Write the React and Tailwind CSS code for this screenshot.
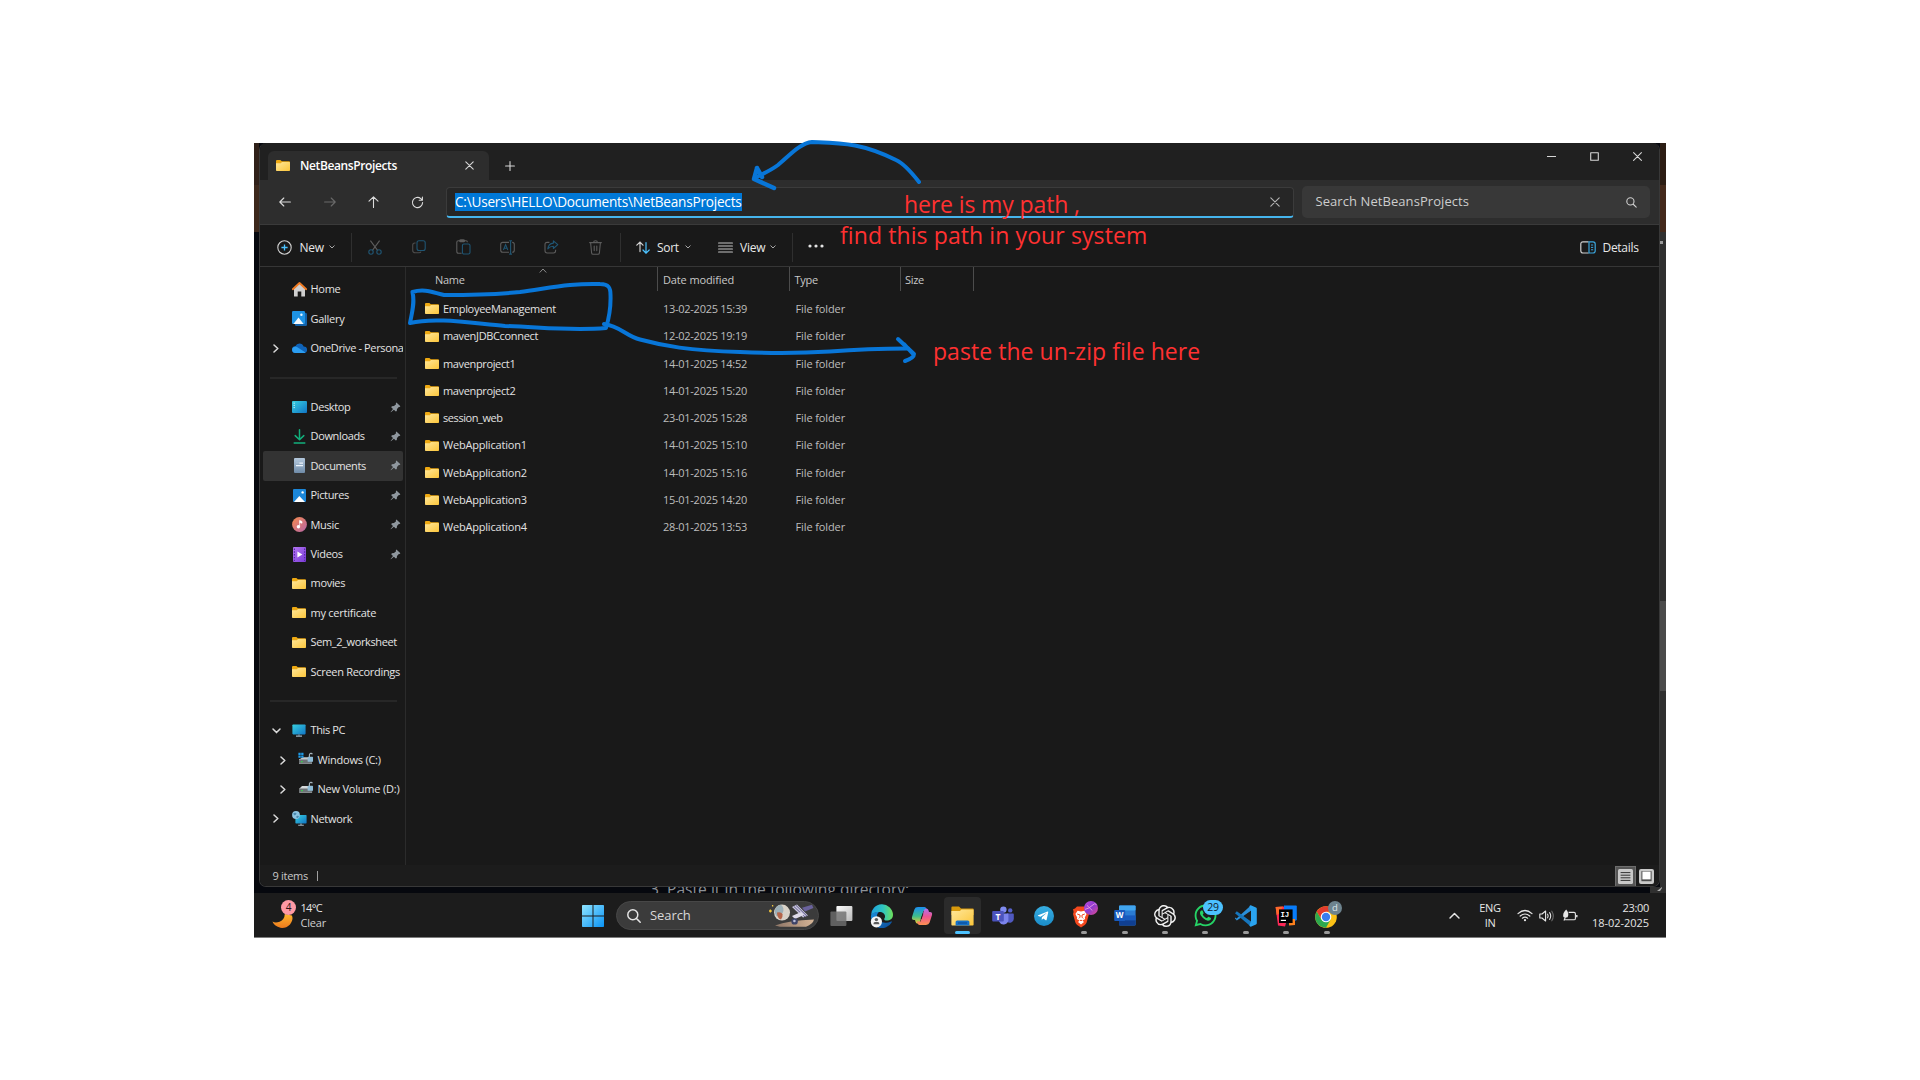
import React from "react";
import { FaWhatsapp, FaTelegramPlane } from "react-icons/fa";
import { SiOpenai } from "react-icons/si";

/* ---------- shared gradients ---------- */
function Defs() {
  return (
    <svg width="0" height="0" className="absolute">
      <defs>
        <linearGradient id="folder" x1="0" y1="0" x2="1" y2="1">
          <stop offset="0" stopColor="#ffe79b" />
          <stop offset="1" stopColor="#fcc63a" />
        </linearGradient>
        <linearGradient id="screen" x1="0" y1="0" x2="1" y2="1">
          <stop offset="0" stopColor="#37d0e0" />
          <stop offset="1" stopColor="#1174c4" />
        </linearGradient>
        <linearGradient id="music" x1="0" y1="0" x2="1" y2="1">
          <stop offset="0" stopColor="#f78a4c" />
          <stop offset="1" stopColor="#b565a8" />
        </linearGradient>
        <linearGradient id="video" x1="0" y1="0" x2="1" y2="1">
          <stop offset="0" stopColor="#b477f2" />
          <stop offset="1" stopColor="#7a3bd6" />
        </linearGradient>
        <linearGradient id="docs" x1="0" y1="0" x2="0" y2="1">
          <stop offset="0" stopColor="#b4c8dc" />
          <stop offset="1" stopColor="#6f8ba8" />
        </linearGradient>
        <linearGradient id="start" x1="0" y1="0" x2="1" y2="1">
          <stop offset="0" stopColor="#8fe4ff" />
          <stop offset="1" stopColor="#0a93f5" />
        </linearGradient>
        <linearGradient id="moon" x1="0" y1="0" x2="0" y2="1">
          <stop offset="0" stopColor="#ffb52e" />
          <stop offset="1" stopColor="#ee7a1c" />
        </linearGradient>
        <linearGradient id="edgeTop" x1="0" y1="0" x2="1" y2="0">
          <stop offset="0" stopColor="#1d9fe0" />
          <stop offset="0.55" stopColor="#2fc5c0" />
          <stop offset="1" stopColor="#6fe05a" />
        </linearGradient>
        <linearGradient id="edgeLow" x1="0" y1="0" x2="1" y2="1">
          <stop offset="0" stopColor="#1a8fdc" />
          <stop offset="1" stopColor="#0c4a96" />
        </linearGradient>
        <linearGradient id="copA" x1="0" y1="0" x2="0" y2="1">
          <stop offset="0" stopColor="#1c8ef0" />
          <stop offset="0.55" stopColor="#3dbd8c" />
          <stop offset="1" stopColor="#f4d02c" />
        </linearGradient>
        <linearGradient id="copB" x1="0" y1="0" x2="0" y2="1">
          <stop offset="0" stopColor="#b070f0" />
          <stop offset="0.5" stopColor="#ee5590" />
          <stop offset="1" stopColor="#fb9150" />
        </linearGradient>
        <linearGradient id="brave" x1="0" y1="0" x2="1" y2="1">
          <stop offset="0" stopColor="#c04ae0" />
          <stop offset="0.5" stopColor="#8a3bd0" />
          <stop offset="1" stopColor="#e64c8c" />
        </linearGradient>
        <linearGradient id="lens" x1="0" y1="0" x2="1" y2="1">
          <stop offset="0" stopColor="#fdfdfd" />
          <stop offset="1" stopColor="#b9b9b9" />
        </linearGradient>
        <linearGradient id="pill" x1="0" y1="0" x2="1" y2="0">
          <stop offset="0" stopColor="#8d7566" />
          <stop offset="1" stopColor="#d5b496" />
        </linearGradient>
      </defs>
    </svg>
  );
}

/* ---------- small line glyphs ---------- */
const Line = ({ d, w = 14, h = 14, vb = "0 0 14 14", c = "#d6d6d6", s = 1.1, className = "" }) => (
  <svg width={w} height={h} viewBox={vb} fill="none" stroke={c} strokeWidth={s} strokeLinecap="round" strokeLinejoin="round" className={"shrink-0 " + className}>
    <path d={d} />
  </svg>
);

const Chevron = ({ className = "" }) => (
  <Line w={6} h={4} vb="0 0 6 4" d="M.8 .8 3 3 5.2 .8" c="#a8a8a8" s={1} className={className} />
);

/* ---------- sidebar and list icons ---------- */
const Folder = ({ w = 14 }) => (
  <svg width={w} height={(w * 11) / 14} viewBox="0 0 14 11" className="shrink-0">
    <path d="M0 1Q0 0 1 0H4.4L5.8 1.2H13Q14 1.2 14 2.2V6H0Z" fill="#eea912" />
    <path d="M0 3.2H4.8L6 2H13.2Q14 2 14 2.8V10.2Q14 11 13.2 11H.8Q0 11 0 10.2Z" fill="url(#folder)" />
  </svg>
);

const icons = {
  folder: <Folder />,
  home: (
    <svg width="15" height="15" viewBox="0 0 15 15">
      <path d="M2 6.5 7.5 1.5 13 6.5V14Q13 14.5 12.5 14.5H9.3V9.5H5.7V14.5H2.5Q2 14.5 2 14Z" fill="#cfcfcf" />
      <path d="M.8 7.2 7.5 1 14.2 7.2" stroke="#ef7a22" strokeWidth="1.9" fill="none" strokeLinecap="round" strokeLinejoin="round" />
    </svg>
  ),
  gallery: (
    <svg width="15" height="15" viewBox="0 0 15 15">
      <rect x="3" y="2" width="12" height="13" rx="1.2" fill="#1261a8" />
      <rect x="0" y="0" width="13" height="13" rx="1.2" fill="#1e93e4" />
      <path d="M1.4 13 6.5 6.6 11.6 13Z" fill="#f3f8fc" />
      <circle cx="9.4" cy="3.8" r="1.2" fill="#e8f5ff" />
    </svg>
  ),
  onedrive: (
    <svg width="15" height="10" viewBox="0 0 15 10">
      <path d="M3.4 3.2A4.4 4.4 0 0 1 11.6 3.4 3.3 3.3 0 0 1 12 10H3.2A3.2 3.2 0 0 1 3.4 3.2Z" fill="#0f63b8" />
      <path d="M.1 6.6A3.2 3.2 0 0 1 5 4L13.5 9.4Q12.8 10 11.8 10H3.2A3.1 3.1 0 0 1 .1 6.6Z" fill="#2b9df0" />
    </svg>
  ),
  desktop: (
    <svg width="15" height="12" viewBox="0 0 15 12">
      <rect width="15" height="12" rx="1" fill="url(#screen)" />
      <path d="M1.5 2.2h1.4M1.5 4.4h1.4M1.5 6.6h1.4" stroke="#c9f6fa" strokeWidth=".9" />
    </svg>
  ),
  downloads: <Line w={13} h={15} vb="0 0 13 15" d="M6.5 .8V10.4M2.2 6.6 6.5 10.8 10.8 6.6M1.2 14H11.8" c="#12b07c" s={1.5} />,
  documents: (
    <svg width="11" height="15" viewBox="0 0 11 15">
      <rect width="11" height="15" rx="1" fill="url(#docs)" />
      <path d="M2 5.2h7M2 7.6h7" stroke="#eef4fa" strokeWidth="1.3" />
      <path d="M2 5.2h3.4" stroke="#8fa8c2" strokeWidth="1.3" />
    </svg>
  ),
  pictures: (
    <svg width="13" height="13" viewBox="0 0 13 13">
      <rect width="13" height="13" rx="1" fill="#1b86d8" />
      <path d="M1 13 6.3 7 12 13Z" fill="#fff" />
      <circle cx="9.6" cy="3.4" r="1.2" fill="#fff" />
    </svg>
  ),
  music: (
    <svg width="15" height="15" viewBox="0 0 15 15">
      <circle cx="7.5" cy="7.5" r="7.4" fill="url(#music)" />
      <circle cx="6.4" cy="9.8" r="1.7" fill="#fff" />
      <path d="M7.6 9.8V3.4L10 4.6V6.2L7.6 5.4" fill="#fff" stroke="#fff" strokeWidth=".7" />
    </svg>
  ),
  videos: (
    <svg width="13" height="15" viewBox="0 0 13 15">
      <rect width="13" height="15" rx="1" fill="url(#video)" />
      <path d="M1.4 1.5V14M11.6 1.5V14" stroke="#5a24ab" strokeWidth="1.2" strokeDasharray="1.4 1.4" />
      <path d="M4.4 4.4 9.4 7.5 4.4 10.6Z" fill="#fff" />
    </svg>
  ),
  pc: (
    <svg width="14" height="13" viewBox="0 0 14 13">
      <rect x=".4" y=".4" width="13.2" height="10" rx=".8" fill="url(#screen)" />
      <path d="M4 12.2h6" stroke="#9fb4c2" strokeWidth="1.2" />
      <path d="M7 10.4v1.4" stroke="#7d93a3" strokeWidth="1.6" />
    </svg>
  ),
  winDrive: (
    <svg width="16" height="14" viewBox="0 0 16 14" className="mb-[2px]">
      <path d="M2 7 4.5 5.2H12L14 7V12H1V7Z" fill="#c4c9cc" />
      <rect x="1" y="7.4" width="13" height="4.4" rx=".6" fill="#6d7376" />
      <rect x="3" y="9" width="1.6" height="1.3" fill="#38d14c" />
      <path d="M.4 .8h2.3v2.2H.4zM3.2 .8h2.3v2.2H3.2zM.4 3.5h2.3v2.2H.4zM3.2 3.5h2.3v2.2H3.2z" fill="#1e9be8" />
      <path d="M11.4 5V2.8a1.6 1.6 0 0 1 3-.6" stroke="#a9b7c0" strokeWidth="1.1" fill="none" />
      <rect x="9.6" y="4.8" width="5.4" height="5" rx=".6" fill="#8fbdd8" />
    </svg>
  ),
  drive: (
    <svg width="16" height="14" viewBox="0 0 16 14" className="mb-[2px]">
      <path d="M1.5 7.4 4 5H12L14 7.4V12H1.5Z" fill="#d5d9db" />
      <rect x="1.2" y="7.4" width="13" height="4.4" rx=".6" fill="#6d7376" />
      <rect x="3.2" y="9" width="1.6" height="1.3" fill="#38d14c" />
      <path d="M11.4 5V2.8a1.6 1.6 0 0 1 3-.6" stroke="#a9b7c0" strokeWidth="1.1" fill="none" />
      <rect x="9.6" y="4.8" width="5.4" height="5" rx=".6" fill="#8fbdd8" />
    </svg>
  ),
  network: (
    <svg width="15" height="15" viewBox="0 0 15 15">
      <rect x="3.4" y="4" width="11.2" height="8.4" rx=".7" fill="url(#screen)" />
      <path d="M6.2 14.2h5.6M9 12.4v1.6" stroke="#9fb4c2" strokeWidth="1.1" />
      <circle cx="4" cy="4" r="3.9" fill="#8cc3e0" />
      <path d="M1.2 2.6Q3 1 4.6 2.4 4 4.4 2.2 4.2ZM4.4 5Q6.4 4.4 7 5.2 6 7.4 4.6 7Z" fill="#4b88ac" />
    </svg>
  ),
};

const Pin = () => (
  <svg width="11" height="11" viewBox="0 0 11 11" className="shrink-0">
    <path d="M6.4 .6 10.4 4.2 9.6 5 8.8 4.9 7 7 6.8 9 5.8 9.6 3.9 7.8.9 10.3.6 10 3 7 1.2 5.2 1.9 4.3 4 4 6.1 2.2 5.8 1.3Z" fill="#8f979e" />
  </svg>
);

/* ---------- data ---------- */
const sidebar = [
  { icon: "home", text: "Home", t: "tracking-[-0.27px]" },
  { icon: "gallery", text: "Gallery", t: "tracking-[-0.27px]" },
  { icon: "onedrive", text: "OneDrive - Persona", chev: "right", t: "tracking-[-0.37px]" },
  { sep: true },
  { icon: "desktop", text: "Desktop", pin: true, t: "tracking-[-0.35px]" },
  { icon: "downloads", text: "Downloads", pin: true, t: "tracking-[-0.35px]" },
  { icon: "documents", text: "Documents", pin: true, sel: true, t: "tracking-[-0.4px]" },
  { icon: "pictures", text: "Pictures", pin: true, t: "tracking-[-0.35px]" },
  { icon: "music", text: "Music", pin: true, t: "tracking-[-0.3px]" },
  { icon: "videos", text: "Videos", pin: true, t: "tracking-[-0.3px]" },
  { icon: "folder", text: "movies", t: "tracking-[-0.3px]" },
  { icon: "folder", text: "my certificate", t: "tracking-[-0.25px]" },
  { icon: "folder", text: "Sem_2_worksheet", t: "tracking-[-0.38px]" },
  { icon: "folder", text: "Screen Recordings", t: "tracking-[-0.3px]" },
  { sep: true },
  { icon: "pc", text: "This PC", chev: "down", t: "tracking-[-0.38px]" },
  { icon: "winDrive", text: "Windows (C:)", chev: "right", nest: true, t: "tracking-[-0.22px]" },
  { icon: "drive", text: "New Volume (D:)", chev: "right", nest: true, t: "tracking-[-0.21px]" },
  { icon: "network", text: "Network", chev: "right", t: "tracking-[-0.3px]" },
];

const files = [
  ["EmployeeManagement", "13-02-2025 15:39", "tracking-[-0.3px]"],
  ["mavenJDBCconnect", "12-02-2025 19:19", "tracking-[-0.34px]"],
  ["mavenproject1", "14-01-2025 14:52", "tracking-[-0.36px]"],
  ["mavenproject2", "14-01-2025 15:20", "tracking-[-0.36px]"],
  ["session_web", "23-01-2025 15:28", "tracking-[-0.42px]"],
  ["WebApplication1", "14-01-2025 15:10", "tracking-[-0.2px]"],
  ["WebApplication2", "14-01-2025 15:16", "tracking-[-0.2px]"],
  ["WebApplication3", "15-01-2025 14:20", "tracking-[-0.2px]"],
  ["WebApplication4", "28-01-2025 13:53", "tracking-[-0.2px]"],
];

/* ---------- window parts ---------- */
function TitleBar() {
  return (
    <div className="flex h-[37px] items-end bg-[#202020]">
      <div className="ml-[8px] flex h-[29px] w-[221px] items-center rounded-t-[6px] bg-[#2d2d2d] pl-[8px] pr-[15px]">
        <Folder />
        <span className="ml-[10px] pt-[1px] text-[12px] font-semibold tracking-[-0.38px] text-white">NetBeansProjects</span>
        <Line className="ml-auto" w={9} h={9} vb="0 0 9 9" d="M.8 .8 8.2 8.2M8.2 .8 .8 8.2" />
      </div>
      <Line className="mb-[9px] ml-[16px]" w={10} h={10} vb="0 0 10 10" d="M5 .6V9.4M.6 5H9.4" />
      <div className="mb-[19px] ml-auto mr-[17px] flex items-center">
        <Line w={9} h={9} vb="0 0 9 9" d="M.4 4.5H8.6" s={1} />
        <Line className="ml-[34px]" w={9} h={9} vb="0 0 9 9" d="M.7 .7H8.3V8.3H.7Z" />
        <Line className="ml-[34px]" w={9} h={9} vb="0 0 9 9" d="M.6 .6 8.4 8.4M8.4 .6 .6 8.4" />
      </div>
    </div>
  );
}

function AddressRow() {
  return (
    <div className="flex h-[45px] items-center border-b border-[#3a3a3a] bg-[#2d2d2d] pr-[9px]">
      <Line className="ml-[19px]" w={12} h={10} vb="0 0 12 10" d="M11.4 5H.8M4.8 1 .8 5 4.8 9" c="#dcdcdc" />
      <Line className="ml-[33px]" w={12} h={10} vb="0 0 12 10" d="M.6 5H11.2M7.2 1 11.2 5 7.2 9" c="#6a6a6a" />
      <Line className="ml-[32px]" w={11} h={12} vb="0 0 11 12" d="M5.5 11.4V.8M1 5.2 5.5 .8 10 5.2" c="#dcdcdc" />
      <Line className="ml-[32px]" w={13} h={13} vb="0 0 13 13" d="M11.6 6.6A5.1 5.1 0 1 1 9.8 2.6L11.3 4.1M11.4 1V4.2H8.2" c="#dcdcdc" />
      <div className="ml-[22px] flex h-[31px] w-[848px] items-center rounded-[4px] border border-b-2 border-[#3b3b3b] border-b-[#45b4ec] bg-[#262626] pl-[8px] pr-[13px]">
        <span className="h-[18px] bg-[#0078d7] text-[13.6px] leading-[18px] tracking-[-0.22px] text-white">
          C:\Users\HELLO\Documents\NetBeansProjects
        </span>
        <Line className="ml-auto" w={10} h={10} vb="0 0 10 10" d="M.8 .8 9.2 9.2M9.2 .8 .8 9.2" c="#b4b4b4" />
      </div>
      <div className="ml-auto flex h-[32px] w-[348px] items-center rounded-[5px] bg-[#383838] pl-[13.5px] pr-[13px]">
        <span className="text-[13px] tracking-[0.07px] text-[#cdcdcd]">Search NetBeansProjects</span>
        <Line className="ml-auto" w={11} h={11} vb="0 0 11 11" d="M8 4.4A3.6 3.6 0 1 1 .8 4.4 3.6 3.6 0 0 1 8 4.4ZM7 7 10.2 10.2" c="#d0d0d0" />
      </div>
    </div>
  );
}

const Divider = ({ className }) => <div className={"h-[29px] w-px bg-[#2f2f2f] " + className} />;

function Toolbar() {
  return (
    <div className="flex h-[42px] items-center border-b border-[#363636] bg-[#191919] pt-[3px] text-[12px] text-[#e8e8e8]">
      <svg width="15" height="15" viewBox="0 0 15 15" fill="none" className="ml-[16.5px]">
        <circle cx="7.5" cy="7.5" r="6.7" stroke="#cfcfcf" strokeWidth="1.1" />
        <path d="M7.5 4.4V10.6M4.4 7.5H10.6" stroke="#4cc2ff" strokeWidth="1.3" />
      </svg>
      <span className="ml-[8px] mt-[2px] w-[25px] tracking-[-0.2px]">New</span>
      <Chevron className="ml-[4.5px]" />
      <Divider className="ml-[16px]" />
      <svg width="14" height="15" viewBox="0 0 14 15" fill="none" strokeWidth="1.1" className="ml-[16px]">
        <path d="M2.4 .6 9.6 10.4M11.6 .6 4.4 10.4" stroke="#5c5c5c" />
        <circle cx="3" cy="12" r="2.2" stroke="#1f5573" />
        <circle cx="11" cy="12" r="2.2" stroke="#1f5573" />
      </svg>
      <svg width="14" height="14" viewBox="0 0 14 14" fill="none" strokeWidth="1.1" className="ml-[30px]">
        <path d="M3.6 3H2.8Q.7 3 .7 5.2V10.2Q.7 12.8 3.2 12.8H7Q8.6 12.8 9 11.6" stroke="#4c4c4c" />
        <rect x="5" y=".7" width="8.2" height="9.8" rx="2" stroke="#1f5573" />
      </svg>
      <svg width="15" height="16" viewBox="0 0 15 16" fill="none" strokeWidth="1.1" className="ml-[30px]">
        <path d="M5.6 14.2H2.4Q.8 14.2 .8 12.6V3.2Q.8 1.8 2.4 1.8H10Q11.4 1.8 11.4 3.2M3.6 1.8Q3.6 .7 4.6 .7H7.6Q8.6 .7 8.6 1.8 8.6 2.8 7.6 2.8H4.6Q3.6 2.8 3.6 1.8" stroke="#5c5c5c" />
        <rect x="6.4" y="5" width="7.6" height="10" rx="1.6" stroke="#1f5573" />
      </svg>
      <svg width="15" height="15" viewBox="0 0 15 15" fill="none" strokeWidth="1.1" className="ml-[29px]">
        <path d="M9 2.4H2.8Q.7 2.4 .7 4.4V10.2Q.7 12.2 2.8 12.2H9M12.2 2.4Q14.3 2.4 14.3 4.4V10.2Q14.3 12.2 12.2 12.2" stroke="#5c5c5c" />
        <path d="M3.4 10 5.6 4.6 7.8 10M4.2 8.2H7M10.6 .9V13.9M9.2 .7H12M9.2 14.1H12" stroke="#1f5573" />
      </svg>
      <svg width="15" height="14" viewBox="0 0 15 14" fill="none" strokeWidth="1.1" strokeLinejoin="round" className="ml-[29px]">
        <path d="M5.4 2.4H3.2Q1 2.4 1 4.6V10.8Q1 13 3.2 13H9.4Q11.6 13 11.6 10.8V9.8" stroke="#5c5c5c" />
        <path d="M9.4 .8 13.8 4.7 9.4 8.5V6.2Q6 6.2 3.8 8.8 4.4 3.6 9.4 3.1Z" stroke="#1f5573" />
      </svg>
      <Line className="ml-[30px]" w={13} h={15} vb="0 0 13 15" c="#5c5c5c" d="M.6 2.6H12.4M4.6 2.4Q4.6 .7 6.5 .7T8.4 2.4M1.6 2.8 2.6 12.8Q2.8 14.2 4 14.2H9Q10.2 14.2 10.4 12.8L11.4 2.8M5.2 6V10.6M7.8 6V10.6" />
      <Divider className="ml-[18px]" />
      <svg width="14" height="13" viewBox="0 0 14 13" fill="none" strokeWidth="1.2" strokeLinecap="round" className="ml-[15px]">
        <path d="M4 10.6V1.2M.8 4.2 4 1 7 4.2" stroke="#cfcfcf" />
        <path d="M10 1.6V12M7 9 10 12.2 13.2 9" stroke="#4cc2ff" />
      </svg>
      <span className="ml-[7px] mt-[2px] w-[24px] tracking-[-0.3px]">Sort</span>
      <Chevron className="ml-[4px]" />
      <Line className="ml-[27px]" w={15} h={11} vb="0 0 15 11" s={1.2} c="#c4c4c4" d="M.6 1H14.4M.6 4H14.4M.6 7H14.4M.6 10H14.4" />
      <span className="ml-[7px] mt-[2px] w-[27px] tracking-[-0.2px]">View</span>
      <Chevron className="ml-[3px]" />
      <Divider className="ml-[16px]" />
      <svg width="16" height="4" viewBox="0 0 16 4" fill="#e4e4e4" className="-mt-[2px] ml-[15px]">
        <circle cx="2" cy="2" r="1.6" />
        <circle cx="8" cy="2" r="1.6" />
        <circle cx="14" cy="2" r="1.6" />
      </svg>
      <svg width="16" height="13" viewBox="0 0 16 13" fill="none" className="ml-auto">
        <path d="M8.6 .8H3Q.8 .8 .8 3V9.8Q.8 12 3 12H8.6" stroke="#cfcfcf" strokeWidth="1.2" />
        <path d="M9 .8H13Q15.2 .8 15.2 3V9.8Q15.2 12 13 12H9Z" stroke="#3ba6dd" strokeWidth="1.2" />
        <path d="M11 4H13.2M11 6.4H13.2M11 8.8H13.2" stroke="#3ba6dd" />
      </svg>
      <span className="ml-[7px] mr-[19px] mt-[2px] w-[37.5px] tracking-[-0.3px]">Details</span>
    </div>
  );
}

function SideRow({ item }) {
  if (item.sep)
    return (
      <div className="flex h-[29.42px] items-center pl-[7px]">
        <div className="h-[2px] w-[127px] bg-[#272727]" />
      </div>
    );
  return (
    <div className={"flex h-[29.42px] items-center overflow-hidden rounded-[2px] " + (item.sel ? "bg-[#333333]" : "")}>
      <div className={"flex w-[26px] shrink-0 items-center justify-center " + (item.nest ? "ml-[7px]" : "")}>
        {item.chev === "right" && <Line w={6} h={9} vb="0 0 6 9" d="M1 1 4.8 4.5 1 8" c="#dadada" s={1.5} />}
        {item.chev === "down" && <Line w={9} h={6} vb="0 0 9 6" d="M1 1 4.5 4.6 8 1" c="#dadada" s={1.5} />}
      </div>
      <div className="ml-[2px] flex w-[16px] shrink-0 items-center justify-center">{icons[item.icon]}</div>
      <span className={"ml-[3.5px] whitespace-nowrap text-[11px] text-[#e4e4e4] " + item.t}>{item.text}</span>
      {item.pin && (
        <div className="ml-auto mr-[2px]">
          <Pin />
        </div>
      )}
    </div>
  );
}

function Content() {
  return (
    <div className="flex h-[598px] bg-[#191919]">
      <div className="w-[146px] border-r border-[#2b2b2b] pl-[3px] pr-[2px] pt-[7.8px]">
        {sidebar.map((s, i) => (
          <SideRow key={i} item={s} />
        ))}
      </div>
      <div className="flex-1 text-[11px]">
        <div className="flex h-[24px] text-[#c8c8c8]">
          <div className="relative flex w-[252px] items-center border-r border-[#4c4c4c] pl-[29px] pt-[2px] tracking-[-0.3px]">
            Name
            <Line className="absolute left-[133px] top-[1px]" w={8} h={5} vb="0 0 8 5" d="M1 4.2 4 1 7 4.2" c="#8a8a8a" s={1} />
          </div>
          <div className="flex w-[132px] items-center border-r border-[#4c4c4c] pl-[5px] pt-[2px] tracking-[-0.13px]">Date modified</div>
          <div className="flex w-[111px] items-center border-r border-[#4c4c4c] pl-[4.5px] pt-[2px] tracking-[-0.3px]">Type</div>
          <div className="flex w-[73px] items-center border-r border-[#4c4c4c] pl-[4px] pt-[2px] tracking-[-0.3px]">Size</div>
        </div>
        <div className="pt-[4.2px]">
          {files.map(([name, date, t]) => (
            <div key={name} className="flex h-[27.25px] items-center pl-[19px] text-[#bdbdbd]">
              <Folder />
              <span className={"ml-[4px] w-[220px] pt-[1px] text-[#e2e2e2] " + t}>{name}</span>
              <span className="w-[132.5px] pt-[1px] tracking-[-0.27px]">{date}</span>
              <span className="pt-[1px] tracking-[-0.11px]">File folder</span>
            </div>
          ))}
        </div>
      </div>
    </div>
  );
}

function StatusBar() {
  return (
    <div className="flex h-[22px] items-center bg-[#1c1c1c] pl-[12.5px] pr-[5px] text-[11px] text-[#c8c8c8]">
      <span className="tracking-[-0.28px]">9 items</span>
      <span className="ml-[9px] h-[10px] w-px bg-[#a0a0a0]" />
      <div className="ml-auto flex h-[21px] w-[21px] items-center justify-center border border-[#6e6e6e] bg-[#555555]">
        <svg width="15" height="15" viewBox="0 0 15 15">
          <rect width="15" height="15" rx="1.5" fill="#c9c9c9" />
          <path d="M2.6 3.6H12.4M2.6 6.2H12.4M2.6 8.8H12.4M2.6 11.4H12.4" stroke="#333" strokeWidth="1" />
        </svg>
      </div>
      <svg width="15" height="15" viewBox="0 0 15 15" className="ml-[3px]">
        <rect width="15" height="15" rx="2" fill="#c9c9c9" />
        <rect x="2.4" y="2.2" width="10.2" height="10" fill="#4c4c4c" />
        <rect x="3.4" y="2.6" width="8.2" height="7.8" fill="#fff" />
      </svg>
    </div>
  );
}

/* ---------- taskbar ---------- */
const apps = {
  taskView: (
    <svg width="23" height="22" viewBox="0 0 23 22">
      <rect x="6.4" y="1" width="16" height="15" rx="1" fill="url(#lens)" />
      <rect x=".4" y="6.4" width="16" height="14.6" rx="1" fill="#6f6f6f" fillOpacity=".82" />
    </svg>
  ),
  edge: (
    <svg width="24" height="24" viewBox="0 0 24 24">
      <path d="M1 11.6A11 11 0 0 1 23 10.8C23 15 19.6 16.6 17 16.6 14.6 16.6 13.8 15.6 14.4 14.6 16.4 11.4 13.6 8 9.6 8 5 8 1.4 10 1 11.6Z" fill="url(#edgeTop)" />
      <path d="M1 12C1 9.4 5 7.6 9 8 6 10 6.6 14.4 9.6 17 13 19.8 18.6 18.6 21 17.4 21.8 17.2 22 17.8 21.6 18.4A11 11 0 0 1 1 12Z" fill="url(#edgeLow)" />
      <circle cx="6.4" cy="17.8" r="5.6" fill="#f4f4f4" />
      <circle cx="6.4" cy="15.6" r="1.7" fill="#5c5c5c" />
      <path d="M3.4 20.2Q3.4 18 5 18H7.8Q9.4 18 9.4 20.2Z" fill="#5c5c5c" />
    </svg>
  ),
  copilot: (
    <svg width="22" height="20" viewBox="0 0 22 20">
      <path d="M7 1H13.4Q15 1 15.6 3L16.2 5H12.4L9 15.8Q8.4 17.6 6.6 17.6 5.2 17.6 4.6 16L4 14H3Q.4 14 1 11L3.4 3.4Q4.2 1 7 1Z" fill="url(#copA)" />
      <path d="M15 19H8.6Q7 19 6.4 17L5.8 15.4H9.6L13 4.2Q13.6 2.4 15.4 2.4 16.8 2.4 17.4 4L18 6H19Q21.6 6 21 9L18.6 16.6Q17.8 19 15 19Z" fill="url(#copB)" />
      <path d="M11.6 7.4H12.4L10.6 13H9.6Z" fill="#1c1c1c" />
    </svg>
  ),
  explorer: (
    <svg width="23" height="20" viewBox="0 0 23 20">
      <path d="M.4 1.4Q.4 .4 1.4 .4H8L10 2.4H22Q22.6 2.4 22.6 3.4V9H.4Z" fill="#d99a0c" />
      <path d="M.4 5H9L10.4 3.6H22.6V18.8Q22.6 19.6 21.8 19.6H1.2Q.4 19.6 .4 18.8Z" fill="url(#folder)" />
      <path d="M4.6 19.6V16Q4.6 14.4 6.2 14.4H16.8Q18.4 14.4 18.4 16V19.6Z" fill="#1470c8" />
      <path d="M7 17H16" stroke="#0b4c92" strokeWidth="1.1" />
    </svg>
  ),
  teams: (
    <svg width="22" height="20" viewBox="0 0 22 20">
      <circle cx="11.4" cy="3.6" r="3.2" fill="#7f8bf0" />
      <circle cx="18.2" cy="4.4" r="2.2" fill="#5560c8" />
      <path d="M15 7.6H21Q21.8 7.6 21.8 8.4V13A4 4 0 0 1 15 15.6Z" fill="#5059c0" />
      <path d="M7 7.6H16.4V14.6A5 5 0 0 1 7 15.6Z" fill="#7b83eb" />
      <rect x=".2" y="5" width="11.6" height="10.6" rx="1" fill="#4b53bc" />
      <text x="6" y="13.6" textAnchor="middle" fontSize="8.5" fontWeight="700" fill="#fff" className="font-['Open_Sans',sans-serif]">T</text>
    </svg>
  ),
  telegram: (
    <div className="flex h-[20px] w-[20px] items-center justify-center rounded-full bg-linear-to-b from-[#37aee2] to-[#1a8cc8]">
      <FaTelegramPlane className="mr-[2px] text-[12px] text-white" />
    </div>
  ),
  brave: (
    <div className="relative flex h-[24px] w-[24px] items-end">
      <svg width="18" height="22" viewBox="0 0 18 22">
        <path d="M5 .6H13L15 2.6 17 3.2 16.4 6 17 8 14.6 16.6Q14.2 18 12.8 19L9 21.6 5.2 19Q3.8 18 3.4 16.6L1 8 1.6 6 1 3.2 3 2.6Z" fill="#f4481e" />
        <path d="M9 5.4 12.4 4.8 14.6 8 12.8 11.4 13.2 13 10.4 14.4 12 16 9 18.4 6 16 7.6 14.4 4.8 13 5.2 11.4 3.4 8 5.6 4.8Z" fill="#fff" />
        <path d="M5.2 8 8 9V11.2L6.8 12.4M12.8 8 10 9V11.2L11.2 12.4M8 14.4H10" stroke="#f4481e" strokeWidth="1" fill="none" />
      </svg>
      <svg width="14" height="14" viewBox="0 0 14 14" className="absolute -right-[1.5px] -top-[3px]">
        <circle cx="7" cy="7" r="7" fill="url(#brave)" />
        <path d="M1 8.4Q5 7.6 8 4.6T12.4 3.4M3 4.4 8.4 9.6" stroke="#f09be0" strokeWidth=".9" fill="none" />
      </svg>
    </div>
  ),
  word: (
    <svg width="22" height="21" viewBox="0 0 22 21">
      <rect x="5" y=".4" width="16.6" height="20" rx="1" fill="#2b7cd3" />
      <rect x="5" y=".4" width="16.6" height="5.2" rx="1" fill="#41a5ee" />
      <rect x="5" y="10.4" width="16.6" height="5" fill="#185abd" />
      <path d="M5 15.2H21.6V19.4Q21.6 20.4 20.6 20.4H6Q5 20.4 5 19.4Z" fill="#103f91" />
      <rect x=".2" y="5" width="11" height="11" rx="1" fill="#185abd" />
      <text x="5.7" y="13.4" textAnchor="middle" fontSize="8" fontWeight="700" fill="#fff" className="font-['Open_Sans',sans-serif]">W</text>
    </svg>
  ),
  openai: <SiOpenai className="text-[22px] text-[#f0f0f0]" />,
  whatsapp: (
    <div className="relative">
      <FaWhatsapp className="text-[25px] text-[#25d366]" />
      <div className="absolute -top-[3px] left-[10px] flex h-[15px] w-[20px] items-center justify-center rounded-full bg-[#4cc2ff] text-[10.5px] leading-none tracking-[-0.3px] text-[#10202c]">29</div>
    </div>
  ),
  vscode: (
    <svg width="22" height="22" viewBox="0 0 22 22">
      <path d="M15.8 .4 1.6 13.4 0 12.4V13.4L1.8 15.6 16 5.8Z" fill="#2a8fd8" />
      <path d="M0 8.2 1.8 6.2 16 16.4 15.8 21.6Z" fill="#1676bd" />
      <path d="M15.8 .3 21 2.6Q21.8 3 21.8 3.8V18.2Q21.8 19 21 19.4L15.8 21.7Q14.8 21.6 14.4 20.6L16 16V6L14.4 1.4Q14.8 .4 15.8 .3Z" fill="#2aa4f0" />
      <path d="M16 6V16L9.4 11Z" fill="#1c1c1c" />
    </svg>
  ),
  intellij: (
    <svg width="22" height="22" viewBox="0 0 22 22">
      <path d="M.6 2 10 1.4 14 8 10 21.6 3 20.6Z" fill="#fe2857" />
      <path d="M.6 2 8 1.6 4 9 1.6 10Z" fill="#fb6a2a" />
      <path d="M9 .6H21Q21.8 .6 21.8 1.6V15L18 17 9 8Z" fill="#087cfa" />
      <path d="M14 14H20V20L14 20.6Z" fill="#fc801d" />
      <rect x="4" y="4.4" width="13.6" height="13.6" fill="#000" />
      <text x="5.4" y="11.6" fontSize="7.4" fontWeight="700" fill="#fff" className="font-['Liberation_Mono',monospace]">IJ</text>
      <path d="M5.8 15.4H11" stroke="#fff" strokeWidth="1.2" />
    </svg>
  ),
  chrome: (
    <div className="relative flex h-[24px] w-[24px] items-end">
      <svg width="22" height="22" viewBox="0 0 22 22">
        <circle cx="11" cy="11" r="10.8" fill="#fbc116" />
        <path d="M1.65 5.6A10.8 10.8 0 0 1 20.35 5.6L11 5.8 6.4 13.6Z" fill="#e33b2e" />
        <path d="M1.65 5.6A10.8 10.8 0 0 0 11 21.8L15.6 13.6 6.4 13.6Z" fill="#2da94f" />
        <circle cx="11" cy="11" r="5.3" fill="#fff" />
        <circle cx="11" cy="11" r="4.2" fill="#3a7df0" />
      </svg>
      <div className="absolute -right-[3px] -top-[3px] flex h-[14px] w-[14px] items-center justify-center rounded-full bg-[#6d838e] text-[9.5px] leading-none text-[#dfe6ea]">d</div>
    </div>
  ),
};

const taskApps = [
  ["taskView", ""], ["edge", ""], ["copilot", ""], ["explorer", "active"], ["teams", ""], ["telegram", ""],
  ["brave", "open"], ["word", "open"], ["openai", "open"], ["whatsapp", "open"], ["vscode", "open"], ["intellij", "open"], ["chrome", "open"],
];

function Taskbar() {
  return (
    <div className="flex h-[45px] items-center border-b border-[#7d7d7d] bg-[#1c1c1c] pt-[1px] text-[11px] text-[#e6e6e6]">
      <div className="relative ml-[17px] h-[30px] w-[25px]">
        <svg width="22" height="16" viewBox="0 0 22 16" className="absolute bottom-[2px] left-[1px]">
          <path d="M.4 8.6Q3.4 10.4 7.6 8.8 12.6 6.6 12.8 1L20 2.6Q21.6 7 18 11.4 13.8 15.6 8.4 14.8 2.6 13.6.4 8.6Z" fill="url(#moon)" />
        </svg>
        <div className="absolute -top-[1px] left-[10px] flex h-[15px] w-[15px] items-center justify-center rounded-full bg-[#ff99a4] text-[10px] leading-none text-[#2a1517]">4</div>
      </div>
      <div className="ml-[4.5px] w-[40px] leading-[14.6px]">
        <div className="tracking-[-0.68px]">14°C</div>
        <div className="tracking-[-0.2px] text-[#cfcfcf]">Clear</div>
      </div>
      <svg width="22" height="22" viewBox="0 0 22 22" className="ml-[241.5px]">
        <path d="M.8 0H10.5V10.5H0V.8Q0 0 .8 0ZM11.5 0H21.2Q22 0 22 .8V10.5H11.5ZM0 11.5H10.5V22H.8Q0 22 0 21.2ZM11.5 11.5H22V21.2Q22 22 21.2 22H11.5Z" fill="url(#start)" />
      </svg>
      <div className="ml-[12px] flex h-[29px] w-[203px] items-center overflow-hidden rounded-full border border-[#474747] bg-[#3b3b3b] pl-[10px] pr-[2px]">
        <Line w={14} h={14} vb="0 0 14 14" d="M10.8 5.8A5 5 0 1 1 .8 5.8 5 5 0 0 1 10.8 5.8ZM9.4 9.4 13.2 13.2" c="#e4e4e4" s={1.5} />
        <span className="ml-[9px] text-[13px] tracking-[-0.08px] text-[#d8d8d8]">Search</span>
        <svg width="48" height="25" viewBox="0 0 48 25" className="ml-auto">
          <path d="M7 22.6Q20 17.4 46 16.6 45 21 38 23.8H12Z" fill="url(#pill)" />
          <circle cx="14" cy="9.6" r="8" fill="#d9d2c8" />
          <path d="M7 7Q8 2.4 13 1.8 17 5 14.6 10 11 14 8.4 13 6 10 7 7Z" fill="#9db0b8" />
          <path d="M9 9.6Q13 8.6 14.6 11 15 14 13 16.6 9 15.6 9 9.6Z" fill="#b5654a" />
          <path d="M24 4 29 1.6 40 12.4 35 14.6Z" fill="#c7c4dd" />
          <path d="M26 3.6 37 14M28 2.4 39 13.2" stroke="#5f5a86" strokeWidth="1" />
          <path d="M34 4.8 44 1.8 45.4 5 37 8.4Z" fill="#6a629c" />
          <path d="M24 13 33 9 36 12 27 16Z" fill="#ddd9e8" />
          <circle cx="26.6" cy="18.4" r="3.2" fill="#3e4468" />
          <circle cx="26.4" cy="18" r="1.3" fill="#b9bdd8" />
          <path d="M2.4 6.6V9.4M1 8H3.8M4.6 2V3.6" stroke="#f2c53c" strokeWidth="1.3" />
        </svg>
      </div>
      <div className="ml-[2px] flex">
        {taskApps.map(([name, state]) => (
          <div key={name} className="flex w-[40.47px] justify-center">
            <div className={"relative flex h-[37px] w-[37px] items-center justify-center rounded-[4px] " + (state === "active" ? "bg-[#2b2b2b]" : "")}>
              {apps[name]}
              {state === "active" && <div className="absolute bottom-0 h-[3px] w-[15px] rounded-full bg-[#4cc2ff]" />}
              {state === "open" && <div className="absolute bottom-0 h-[3px] w-[6px] rounded-full bg-[#9a9a9a]" />}
            </div>
          </div>
        ))}
      </div>
      <div className="ml-auto flex items-center pr-[17px]">
        <Line w={11} h={7} vb="0 0 11 7" d="M1 6 5.5 1.4 10 6" c="#e6e6e6" s={1.4} />
        <div className="ml-[18px] w-[24px] text-center leading-[14.6px] tracking-[-0.36px]">
          <div>ENG</div>
          <div>IN</div>
        </div>
        <svg width="16" height="13" viewBox="0 0 16 13" fill="none" stroke="#e6e6e6" strokeWidth="1.2" strokeLinecap="round" className="ml-[15px]">
          <path d="M1 4.6Q8 -1.6 15 4.6M3.2 7Q8 3 12.8 7M5.4 9.2Q8 7.2 10.6 9.2" />
          <circle cx="8" cy="11.2" r="1.1" fill="#e6e6e6" stroke="none" />
        </svg>
        <svg width="16" height="12" viewBox="0 0 16 12" fill="none" stroke="#e6e6e6" strokeWidth="1.1" strokeLinecap="round" strokeLinejoin="round" className="ml-[6px]">
          <path d="M.8 4H3L6.6 1V11L3 8H.8ZM8.6 4.2Q9.8 6 8.6 7.8M10.6 2.6Q12.8 6 10.6 9.4" />
          <path d="M12.8 1.2Q15.8 6 12.8 10.8" stroke="#6a6a6a" />
        </svg>
        <svg width="16" height="13" viewBox="0 0 16 13" fill="none" stroke="#e6e6e6" strokeWidth="1.1" className="ml-[7px]">
          <path d="M6.6 3.4H12Q13.4 3.4 13.4 4.8V9.4Q13.4 10.8 12 10.8H3.6Q2.4 10.8 2.2 9.8" />
          <path d="M14.8 6V8.2" strokeWidth="1.4" />
          <path d="M4.2 .6Q7.6 4.6 5.6 8.2 3.6 9 1.4 8 .2 4.6 4.2 .6Z" fill="#e6e6e6" stroke="none" />
          <path d="M2 11.6 3.4 8" />
        </svg>
        <div className="ml-[9px] w-[62px] text-right leading-[14.6px]">
          <div className="tracking-[-0.3px]">23:00</div>
          <div className="tracking-[-0.05px]">18-02-2025</div>
        </div>
      </div>
    </div>
  );
}

/* ---------- hand-drawn notes laid over the window ---------- */
function Annotations() {
  return (
    <div className="pointer-events-none absolute inset-0 text-[23px] leading-none text-[#ff3131]">
      <svg width="1920" height="1080" viewBox="0 0 1920 1080" fill="none" stroke="#0876d8" strokeWidth="4" strokeLinecap="round" strokeLinejoin="round" className="absolute left-0 top-0">
        <path d="M919 182Q905 164 896 160C880 152 868 148 855 145.500 838 142.500 822 142.500 812 142 800 143 788 157 778 165 770 171 762 174 755 178" />
        <path d="M757 168 754 179 774 188M757 168 762 177" strokeWidth="4.500" />
        <path d="M412.500 292C425 288 434 293 444 295 470 295 500 294 520 292 550 288 572 283 600 284 609 284 610.500 288 610.500 295 611 308 609 318 606 328 570 331 540 327 505 326 470 323 435 317 410 323 412 312 415 303 412.500 292" />
        <path d="M604 324C620 326 626 336 640 339.500 664 346 688 350.500 740 352 775 353.500 805 353 830 351.500 855 349.500 880 348.500 908 348.500" />
        <path d="M898 339 914 354Q914 358 905 361M904 344 913 354" />
      </svg>
      <div className="absolute left-[904px] top-[193px] whitespace-pre tracking-[-0.12px]">here is my path ,</div>
      <div className="absolute left-[840px] top-[224px] whitespace-pre tracking-[0.1px]">find this path in your system</div>
      <div className="absolute left-[933px] top-[340px] whitespace-pre tracking-[0.05px]">paste the un-zip file here</div>
    </div>
  );
}

export default function App() {
  return (
    <div className="relative h-[1080px] w-[1920px] overflow-hidden bg-white font-['Open_Sans','Noto_Sans',sans-serif]">
      <Defs />
      <div className="ml-[254px] pt-[143px]">
        <div className="w-[1412px] bg-[#06080e]">
          <div className="flex h-[744px]">
            <div className="w-[5px]">
              <div className="h-[42px] bg-[#2f2019]" />
              <div className="h-[47px] bg-[#3c281c]" />
            </div>
            <div className="w-[1401px] overflow-hidden rounded-[7px] border-x border-b border-[#383838]">
              <TitleBar />
              <AddressRow />
              <Toolbar />
              <Content />
              <StatusBar />
            </div>
            <div className="flex w-[6px] flex-col bg-[#303030]">
              <div className="h-[42px] bg-[#2c1d14]" />
              <div className="h-[47px] bg-[#44291b]" />
              <div className="h-[12px] pt-[9px]">
                <div className="h-[3px] w-[3px] bg-[#9a9a9a]" />
              </div>
              <div className="mt-[357px] h-[90px] bg-[#4b4b4b]" />
            </div>
          </div>
          <div className="flex h-[6px] items-start overflow-hidden pl-[396px] text-[15.6px] leading-[6px] text-[#8d9196]">
            <span className="-mt-[1px] whitespace-nowrap">3. Paste it in the following directory:</span>
            <div className="ml-auto h-[6px] w-[16px] bg-[#303030]">
              <svg width="6" height="5" viewBox="0 0 6 5" className="ml-[7px]">
                <path d="M0 4 5 0V1L3 4Z" fill="#b0b0b0" />
              </svg>
            </div>
          </div>
          <Taskbar />
        </div>
      </div>
      <Annotations />
    </div>
  );
}
